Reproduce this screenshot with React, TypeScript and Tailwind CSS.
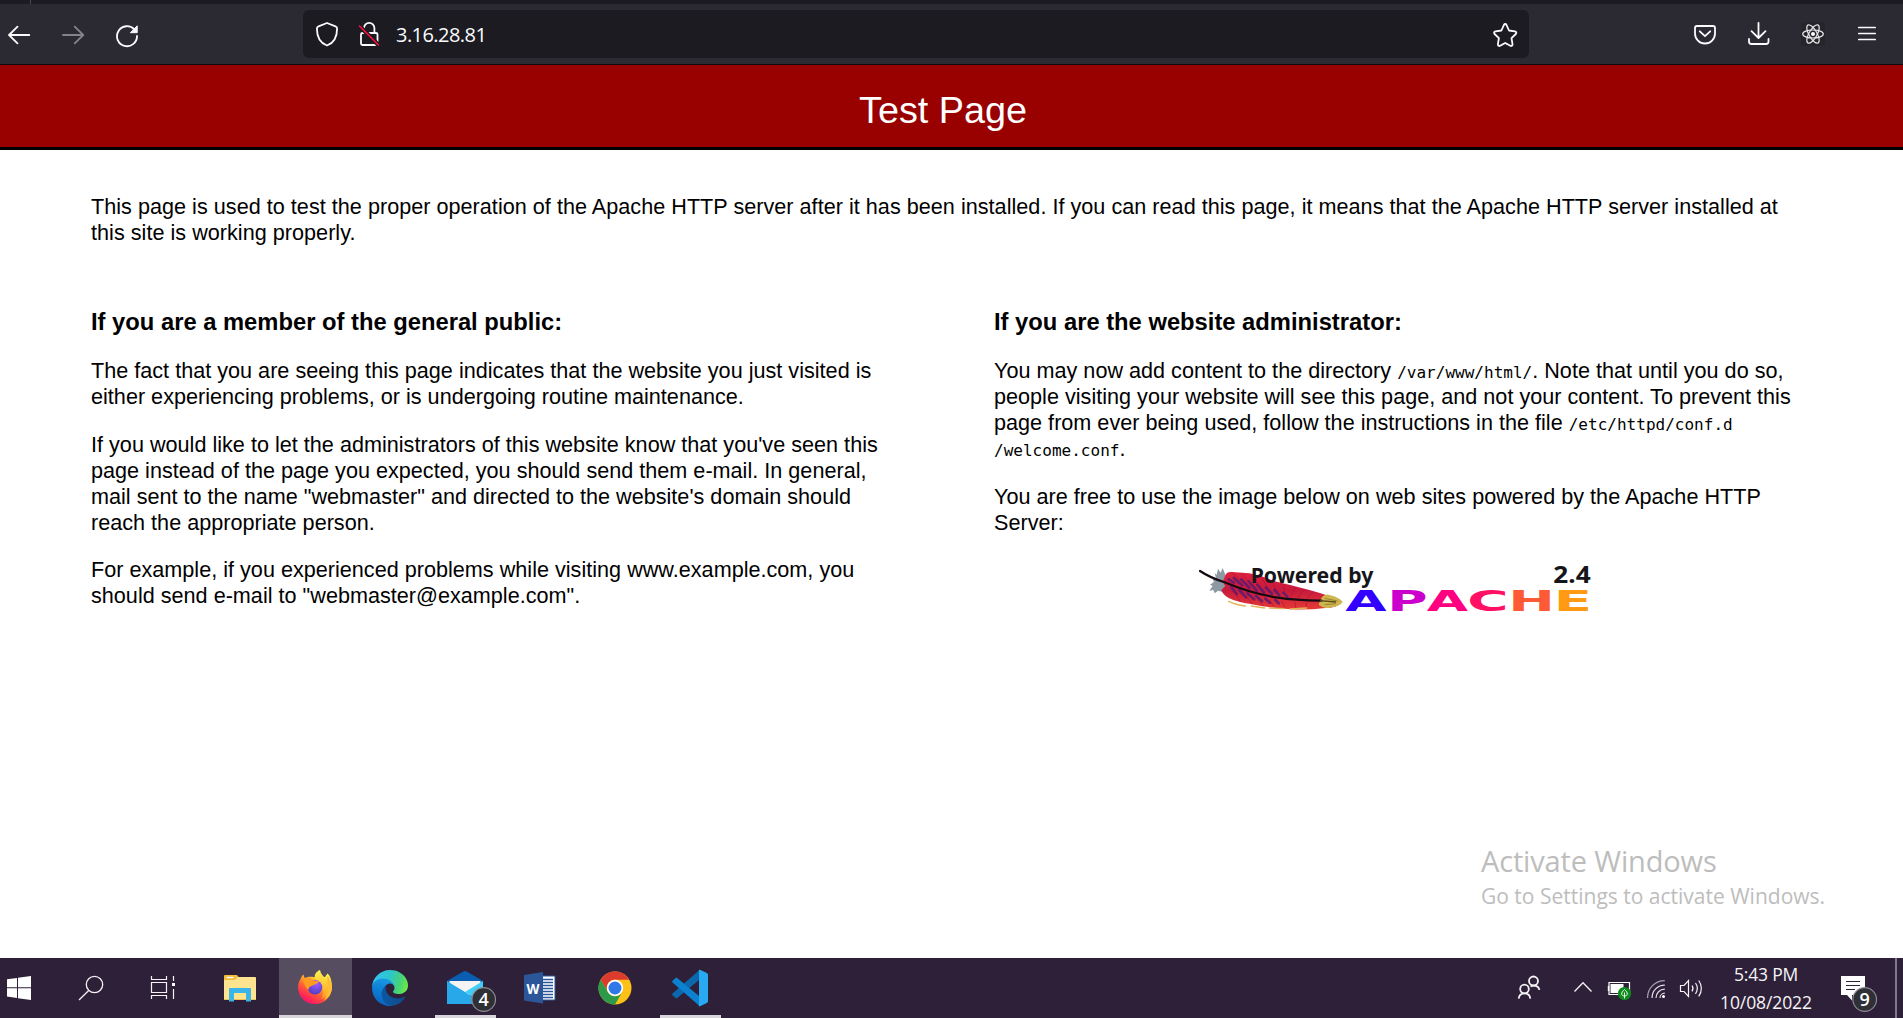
import React from 'react';

type TileProps = { x: number; w: number; children: React.ReactNode };

/* Toolbar cell: its viewBox keeps window coordinates, so cells can be tiled side by side. */
function Tool({ x, w, children }: TileProps) {
  return (
    <svg className="h-[48px] shrink-0" width={w} height={48} viewBox={`${x} 10 ${w} 48`} fill="none" stroke="#fbfbfe" strokeWidth="1.8" strokeLinecap="round" strokeLinejoin="round">
      {children}
    </svg>
  );
}

function Tile({ x, w, children }: TileProps) {
  return (
    <svg className="h-[60px] shrink-0" width={w} height={60} viewBox={`${x} 958 ${w} 60`} fill="none">
      {children}
    </svg>
  );
}

function Toolbar() {
  return (
    <div className="flex h-[60px] items-center bg-[#2b2a33]">
      <div className="flex w-[303px]">
        <Tool x={0} w={46}><path d="M29.3 35H9M17.5 26.7L9 35l8.5 8.3" /></Tool>
        <Tool x={46} w={54}><path stroke="#84838a" d="M63 35h20.3M74.700 26.700L83.300 35l-8.600 8.300" /></Tool>
        <Tool x={100} w={60}>
          <path d="M134.500 29.600A10 10 0 1 0 137 36" />
          <path d="M137.200 26.200v6.500h-6.500z" fill="#fbfbfe" stroke="#fbfbfe" strokeWidth="1" />
        </Tool>
      </div>
      <div className="flex h-[48px] w-[1226px] items-center rounded-[6px] bg-[#1c1b22]">
        <Tool x={303} w={45}>
          <path d="M327 23l8.500 3.300c1.100.4 1.600 1 1.600 2.100 0 8-2.600 14.300-10.100 17.100-7.500-2.800-10.100-9.100-10.100-17.100 0-1.100.5-1.700 1.600-2.100z" />
        </Tool>
        <Tool x={348} w={48}>
          <path d="M364 29.500v-1.500a5.200 5.200 0 0 1 10.400 0v5M361 34.500v9a1.500 1.500 0 0 0 1.500 1.500h13.500a1.500 1.500 0 0 0 1.500-1.500v-9a1.500 1.500 0 0 0-1.500-1.500h-13.500a1.500 1.500 0 0 0-1.500 1.500" />
          <path d="M359.500 26l19 19" stroke="#1c1b22" strokeWidth="4.500" />
          <path d="M359.500 26l19 19" stroke="#ff0f3c" strokeWidth="1.600" />
        </Tool>
        <span className="w-[1088px] pt-[2px] font-['Open_Sans','Noto_Sans',sans-serif] text-[20px] leading-[28px] tracking-[-0.550px] text-[#fbfbfe]">3.16.28.81</span>
        <Tool x={1484} w={45}>
          <path d="M1505.200 24c.600 0 1 .4 1.300 1l2.500 5.500 5.900.800c1.400.200 1.900 1.700.900 2.700l-4.300 4.200 1 6c.200 1.400-1.100 2.200-2.200 1.600l-5.100-2.800-5.100 2.800c-1.100.6-2.400-.2-2.200-1.600l1-6-4.300-4.200c-1-1-.5-2.500.9-2.700l5.900-.8 2.500-5.500c.3-.6.7-1 1.300-1z" />
        </Tool>
      </div>
      <div className="flex w-[374px] pl-[153px]">
        <Tool x={1682} w={50}>
          <path d="M1697 26h16a2 2 0 0 1 2 2v5.500a10 10 0 0 1-20 0V28a2 2 0 0 1 2-2zM1699.800 31.300l5.200 4.900 5.200-4.900" />
        </Tool>
        <Tool x={1732} w={52}>
          <path d="M1758.500 22.800v14.500M1751.500 31.200l7 6.800 7-6.800M1749 39v2.500a2.500 2.500 0 0 0 2.500 2.500h14.500a2.500 2.500 0 0 0 2.500-2.500V39" />
        </Tool>
        <Tool x={1784} w={56}>
          <rect x="1801" y="22" width="24" height="24" rx="2" fill="#26252c" stroke="none" />
          <g strokeWidth="1.200" stroke="#e9e9ec">
            <ellipse cx="1813" cy="34" rx="10.300" ry="4" />
            <ellipse cx="1813" cy="34" rx="10.300" ry="4" transform="rotate(60 1813 34)" />
            <ellipse cx="1813" cy="34" rx="10.300" ry="4" transform="rotate(120 1813 34)" />
          </g>
          <circle cx="1813" cy="34" r="2" fill="#fff" stroke="none" />
        </Tool>
        <Tool x={1840} w={60}><path d="M1858.800 27.500h16.400M1858.800 33.500h16.400M1858.800 39.500h16.400" strokeWidth="1.700" /></Tool>
      </div>
    </div>
  );
}

/* Feather and word mark, drawn at three units per pixel. */
function ApacheLogo() {
  const letters: [string, number, number, string][] = [
    ['A', 496, 124, '#3300ff'],
    ['P', 622, 121, '#cc00cc'],
    ['A', 740, 124, '#ff0080'],
    ['C', 862, 124, '#ff1065'],
    ['H', 985, 140, '#ff5a36'],
    ['E', 1121, 115, '#ff9a12'],
  ];
  return (
    <svg className="ml-[186px] block h-[75px] w-[430px]" viewBox="0 0 1290 225">
      <defs>
        <linearGradient id="plume" x1="0" y1="0" x2="0" y2="1">
          <stop offset="0" stopColor="#e0203e" />
          <stop offset="0.500" stopColor="#c81a3c" />
          <stop offset="1" stopColor="#e63a34" />
        </linearGradient>
      </defs>
      <path d="M104 70l6 4 4-18 8 12 6-14 8 20 4 40-12 12-14-4-10 8-4-10-12 2 10-14-8-4 12-8-4-8 10-4z" fill="#8d99a2" />
      <path d="M136 76q4-12 20-10l52 4q40 8 70 22 60 14 110 28 30 8 52 16 40 8 46 20-16 18-50 18-50 6-100 4-70-4-124-16-40-6-66-18-18-10-22-24l12-12-8-12z" fill="url(#plume)" />
      <g stroke="#4c1a78" strokeLinecap="round" fill="none" strokeWidth="8" opacity="0.750">
        <path d="M146 88l16 10M162 84l24 22M184 88l24 26M206 94l24 28M232 104l20 24M258 112l18 20M284 120l14 16M310 128l12 12" />
        <path d="M154 112l16 20M178 120l20 22M202 130l20 18M228 138l18 16M256 146l14 12M286 150l10 10" />
      </g>
      <g stroke="#a1123c" strokeWidth="3" fill="none" opacity="0.600">
        <path d="M158 68l28 30M184 70l28 34M216 76l24 36M246 84l20 36M276 94l16 34M310 104l6 34M346 112l-16 32M372 120l-20 26M398 128l-20 20M160 122l22 34M194 134l24 28M230 142l20 26M268 150l14 20M306 154l8 18M344 156l4 18M380 158l-2 16" />
      </g>
      <path d="M146 154q20 10 50 14M214 168l40 6M268 174l44 2M330 177l50-3" stroke="#e2b455" strokeWidth="4" strokeLinecap="round" fill="none" />
      <path d="M420 152q8-20 26-18 34 8 42 22-8 14-42 18-18 0-30-10z" fill="#cdb650" />
      <path d="M434 145l38 8M434 164l34-3" stroke="#9a842c" strokeWidth="3" />
      <path d="M60 63q30 20 74 34 80 34 160 46 50 8 130 9" stroke="#130a12" strokeWidth="6.500" strokeLinecap="round" fill="none" />
      <path d="M420 152l48 4" stroke="#5a4a1c" strokeWidth="4" />
      <g className="font-['Noto_Sans','Open_Sans',sans-serif]" fontWeight="700" fill="#16161a">
        <text x="212" y="98" fontSize="66" textLength="368" lengthAdjust="spacingAndGlyphs">Powered by</text>
        <text x="1120" y="99" fontSize="69" textLength="112" lengthAdjust="spacingAndGlyphs">2.4</text>
      </g>
      <g className="font-['DejaVu_Sans',sans-serif]" fontWeight="700">
        {letters.map(([ch, x, w, fill]) => (
          <text key={x} x={x} y="182" fontSize="84" textLength={w} lengthAdjust="spacingAndGlyphs" fill={fill}>{ch}</text>
        ))}
      </g>
    </svg>
  );
}

function Content() {
  const para = 'mb-[21.6px] whitespace-nowrap tracking-[0.015px]';
  const heading = 'mb-[22px] text-[23.76px] leading-[28px] font-bold';
  const mono = "font-['DejaVu_Sans_Mono',monospace] text-[16px] leading-none";
  return (
    <div className="px-[91px] pt-[44px] font-['Liberation_Sans',Arial,sans-serif] text-[21.6px] leading-[26px] text-black">
      <p className="tracking-[0.027px] whitespace-nowrap">
        This page is used to test the proper operation of the Apache HTTP server after it has been installed. If you can read this page, it means that the Apache HTTP server installed at<br />
        this site is working properly.
      </p>
      <div className="mt-[62px] flex">
        <div className="w-[903px]">
          <h2 className={heading}>If you are a member of the general public:</h2>
          <p className={para}>
            The fact that you are seeing this page indicates that the website you just visited is<br />
            either experiencing problems, or is undergoing routine maintenance.
          </p>
          <p className={para}>
            If you would like to let the administrators of this website know that you've seen this<br />
            page instead of the page you expected, you should send them e-mail. In general,<br />
            mail sent to the name "webmaster" and directed to the website's domain should<br />
            reach the appropriate person.
          </p>
          <p className={para}>
            For example, if you experienced problems while visiting www.example.com, you<br />
            should send e-mail to "webmaster@example.com".
          </p>
        </div>
        <div className="w-[801px]">
          <h2 className={heading}>If you are the website administrator:</h2>
          <p className={para}>
            You may now add content to the directory <code className={mono}>/var/www/html/</code>. Note that until you do so,<br />
            people visiting your website will see this page, and not your content. To prevent this<br />
            page from ever being used, follow the instructions in the file <code className={mono}>/etc/httpd/conf.d</code><br />
            <code className={mono}>/welcome.conf</code>.
          </p>
          <p className="mb-[14px] tracking-[0.025px] whitespace-nowrap">
            You are free to use the image below on web sites powered by the Apache HTTP<br />
            Server:
          </p>
          <ApacheLogo />
        </div>
      </div>
    </div>
  );
}

function Taskbar() {
  return (
    <div className="flex h-[60px] bg-[#2e2039] font-['Open_Sans','Noto_Sans',sans-serif] text-white">
      <Tile x={0} w={45}>
        <path fill="#fff" d="M7 979.300l10-1.400v9.300H7zM18 977.700l13-1.700v11.200H18zM7 988.200h10v9.800l-10-1.400zM18 988.200h13V1000l-13-1.800z" />
      </Tile>
      <Tile x={45} w={80}>
        <g stroke="#f4f2f5" strokeWidth="1.300"><circle cx="94.500" cy="984.500" r="8.200" /><path d="M88.700 990.500l-9.700 9.500" /></g>
      </Tile>
      <Tile x={125} w={80}>
        <path stroke="#f4f2f5" strokeWidth="1.200" d="M151.500 976v3.500h15V976M151.500 982.500h15v10h-15zM151.500 999v-3.500h15v3.500M173.500 976v5M173.500 989v10" />
        <path fill="#fff" d="M172 983h3v3h-3z" />
      </Tile>
      <Tile x={205} w={74}>
        <path fill="#f3bd3a" d="M224 976a1 1 0 0 1 1-1h12l2 2.500-2 3h-13z" />
        <path fill="#fff" d="M226.500 976.800h7v1.400h-7z" />
        <path fill="#ffe48f" d="M224 980h10.500l3.500-3h17a1 1 0 0 1 1 1v22h-32z" />
        <path fill="#e8b84a" d="M224 999.200h32v.8h-32z" />
        <path fill="#3bb4e8" d="M229 989a1 1 0 0 1 1-1h20a1 1 0 0 1 1 1v12.500h-5V993h-12v8.500h-5z" />
      </Tile>
      <div className="flex w-[73px] border-b-[3px] border-[#d8d6da] bg-[#574d60]">
        <svg className="shrink-0" width="73" height="57" viewBox="279 958 73 57">
          <defs>
            <linearGradient id="fox" x1="0.850" y1="0.050" x2="0.200" y2="1">
              <stop offset="0" stopColor="#fff44f" />
              <stop offset="0.350" stopColor="#ffb02e" />
              <stop offset="0.600" stopColor="#ff5a36" />
              <stop offset="0.850" stopColor="#ff1f5c" />
              <stop offset="1" stopColor="#e31587" />
            </linearGradient>
            <radialGradient id="globe" cx="0.600" cy="0.250" r="0.800">
              <stop offset="0" stopColor="#a05cff" />
              <stop offset="1" stopColor="#4a3cbf" />
            </radialGradient>
            <linearGradient id="flame" x1="0.500" y1="0" x2="0.500" y2="1">
              <stop offset="0" stopColor="#fff44f" />
              <stop offset="1" stopColor="#ff9a1f" />
            </linearGradient>
          </defs>
          <path fill="url(#fox)" d="M300.500 979c.4-1.900 1.700-3.600 3.200-4.600 0 1.800.6 3 1.300 3.700 2.500-1.200 5-1.500 8.500-1.100h11.500l2.500-3.500c2.900 2 4.500 8.500 4.500 13 0 10.200-7.200 17.600-17 17.600-9.800 0-17-7.600-17-16.800 0-3 .8-5.800 2.500-8.300z" />
          <path fill="url(#flame)" d="M320 970c.6 4 3 5.700 5.600 8.300 4.700 4.600 4.900 10.300 2 15.500-1.800 3-4 4.500-6.400 5.500 2.700-4.300 3-9.500.6-13.300-1.900-3-6.200-4.500-7-8.500-.6-3.300 2-6.500 5.200-7.500z" />
          <path fill="#ffbd35" d="M327 975.800c3 2.400 4.700 6.600 4.900 11.400.1 6-3.700 11-7.900 13.300 3-5 4.500-9.500 4-14.500z" />
          <circle cx="315" cy="987.300" r="7.300" fill="url(#globe)" />
          <path fill="#ff9b22" d="M303 981c1.500-2.500 5.200-3.500 7.500-3.100 1.600 2.600 4.600 3.100 8.500 3.300-1.200 2.800-4.600 3-6.700 4.400-2 .9-3.600 1.900-4.200 4.400-2.600-2.800-3.500-5.500-5.100-9z" />
        </svg>
      </div>
      <div className="flex w-[83px] items-start pt-[12px] pl-[20px]">
        <svg width="36" height="36" viewBox="4.700 4.700 256 256">
          <defs>
            <linearGradient id="e1" x1="0" y1="0" x2="1" y2="0"><stop offset="0" stopColor="#0c59a4" /><stop offset="1" stopColor="#114a8b" /></linearGradient>
            <linearGradient id="e2" x1="0.600" y1="0" x2="0.300" y2="1"><stop offset="0" stopColor="#1b9de2" /><stop offset="0.500" stopColor="#0c7fd6" /><stop offset="1" stopColor="#0a60b8" /></linearGradient>
            <linearGradient id="e3" x1="0" y1="0.400" x2="1" y2="0.600"><stop offset="0" stopColor="#35c1f1" /><stop offset="0.450" stopColor="#2cc7cb" /><stop offset="0.750" stopColor="#45d07c" /><stop offset="1" stopColor="#6bea46" /></linearGradient>
          </defs>
          <path fill="url(#e1)" d="M235.680 195.490a93.730 93.730 0 0 1-10.540 4.710 101.870 101.870 0 0 1-35.900 6.460c-47.320 0-88.540-32.550-88.540-74.320A31.480 31.480 0 0 1 117.130 105c-42.800 1.800-53.800 46.400-53.800 72.530 0 73.880 68.090 81.370 82.760 81.370 7.910 0 19.840-2.300 27-4.560l1.310-.44a128.340 128.340 0 0 0 66.600-52.800 4 4 0 0 0-5.320-5.610z" />
          <path fill="url(#e2)" d="M110.340 246.340A79.200 79.200 0 0 1 87.600 225a80.720 80.720 0 0 1 29.530-120c3.120-1.470 8.450-4.130 15.540-4a32.350 32.350 0 0 1 25.690 13 31.880 31.880 0 0 1 6.360 18.660c0-.21 24.460-79.600-80-79.600-43.900 0-80 41.660-80 78.210a130.150 130.150 0 0 0 12.110 56 128 128 0 0 0 156.380 67.110 75.550 75.550 0 0 1-62.780-8z" />
          <path fill="url(#e3)" d="M156.940 153.780c-.81 1.050-3.300 2.500-3.300 5.660 0 2.610 1.700 5.120 4.720 7.230 14.380 10 41.490 8.680 41.560 8.680a59.560 59.560 0 0 0 30.270-8.350 61.380 61.380 0 0 0 30.430-52.880c.26-22.410-8-37.310-11.340-43.910C228.110 28.900 182.380 5 132.630 5 62.600 5 5.710 61.230 4.720 131.230c.48-36.540 36.800-66.050 80-66.050 3.500 0 23.460.34 42 10.070 16.340 8.580 24.900 18.940 30.850 29.210 6.180 10.670 7.280 24.150 7.280 29.520s-2.740 13.330-7.910 19.800z" />
        </svg>
      </div>
      <Tile x={435} w={65}>
        <path fill="#0a5db0" d="M447 981l16.300-9.400q1.700-1 3.400 0L483 981v4h-36z" />
        <path fill="#f4f4f4" d="M449.500 981h31v8l-15.500 9-15.500-9z" />
        <path fill="#2fb4ee" d="M447 981l36 23h-36z" />
        <path fill="#42cdf8" d="M483 981l-18 11 18 12z" />
        <path fill="#28a8e8" d="M447 981.500v22.500h34l-16-12z" />
        <circle cx="483.700" cy="999.500" r="11.800" fill="#2f3036" stroke="#8d8a92" strokeWidth="1.200" />
        <text x="483.700" y="1006" textAnchor="middle" fontSize="18" fontWeight="600" fill="#fff">4</text>
        <path fill="#d8d6da" d="M435 1015h61v3h-61z" />
      </Tile>
      <Tile x={500} w={80}>
        <path fill="#fff" stroke="#2b569a" strokeWidth="1" d="M540 976h15v24h-15z" />
        <path stroke="#2b569a" strokeWidth="1.400" d="M542 979.500h11M542 982.500h11M542 985.500h11M542 988.500h11M542 991.500h11M542 994.500h11M542 997.500h11" />
        <path fill="#2b569a" d="M524 975l19-3v31.500l-19-3z" />
        <text x="526.500" y="993.500" fontSize="15" fontWeight="700" textLength="13" lengthAdjust="spacingAndGlyphs" fill="#fff">W</text>
      </Tile>
      <Tile x={580} w={75}>
        <circle cx="615" cy="988" r="16.500" fill="#fbc116" />
        <path fill="#de3b2f" d="M600.700 979.750A16.500 16.500 0 0 1 629.300 979.750H615a8.250 8.250 0 0 0-7.140 12.370z" />
        <path fill="#2c9a48" d="M600.700 979.750A16.500 16.500 0 0 0 615 1004.500l7.140-12.370A8.250 8.250 0 0 1 607.860 992.120z" />
        <circle cx="615" cy="988" r="8.200" fill="#fff" />
        <circle cx="615" cy="988" r="6.500" fill="#2f78ea" />
      </Tile>
      <Tile x={655} w={75}>
        <path fill="#0c68ad" d="M672.500 995.200l3 2.900q.8.700 1.700 0L699 980v-9.500L672.500 993.600q-.8.800 0 1.600z" />
        <path fill="#0b81cf" d="M672.500 980.800l3-2.900q.8-.7 1.700 0L699 996v9.500L672.500 982.400q-.8-.8 0-1.600z" />
        <path fill="#28a9f1" d="M698.500 970.200q.9-.6 2-.1l6.300 3q1.200.6 1.200 2v25.800q0 1.400-1.200 2l-6.300 3q-1.100.5-2-.1.500-.3.500-1.300v-33q0-1-.5-1.300z" />
        <path fill="#d8d6da" d="M660 1015h61v3h-61z" />
      </Tile>
      <div className="flex-1" />
      <Tile x={1500} w={60}>
        <g stroke="#f4f2f5" strokeWidth="1.800"><circle cx="1533.500" cy="981" r="4.500" /><circle cx="1524.500" cy="989" r="4.300" /><path d="M1518.700 998.700c.3-3.400 2.800-5.400 5.800-5.400s5.500 2 5.800 5.400M1530.500 986.500c1-.6 2-.9 3-.9 3 0 5.500 1.500 5.900 4.400" /></g>
      </Tile>
      <Tile x={1560} w={42}><path stroke="#f4f2f5" strokeWidth="1.300" d="M1574.500 991.500l8.500-8.700 8.500 8.700" /></Tile>
      <Tile x={1602} w={38}>
        <path stroke="#fff" strokeWidth="1.200" d="M1609 982.500h20.500v12H1609z" />
        <path fill="#fff" d="M1610.500 984h13v9h-13zM1607.800 986h1.500v5h-1.500z" />
        <circle cx="1624.500" cy="993.500" r="6.600" fill="#0f8a1c" />
        <path stroke="#e4f8e4" strokeWidth="1" d="M1624.500 989.500c4 3.300 3.500 6.500 0 6.500s-4-3.200 0-6.500zM1624.500 992.500v6" />
      </Tile>
      <Tile x={1640} w={34}>
        <g strokeWidth="1.200" stroke="#e4e0e8"><path stroke="#a9a2b0" d="M1647.500 998c0-9.800 7.500-17.300 17.300-17.300" /><path d="M1652 998c0-7.300 5.500-12.800 12.800-12.800M1656 998c0-5 3.800-8.800 8.800-8.800M1660 998c0-2.700 2.100-4.800 4.800-4.800" /></g>
        <circle cx="1663.500" cy="996.500" r="1.500" fill="#fff" />
      </Tile>
      <Tile x={1674} w={38}>
        <g strokeWidth="1.200" stroke="#f4f2f5"><path d="M1680.500 985.500h3.500l4.500-5v16l-4.500-5h-3.500z" /><path d="M1692 985.500q2 2.900 0 5.800M1695.500 983q3.700 5.300 0 10.800M1698.700 980.500q5.500 7.800 0 15.800" /></g>
      </Tile>
      <div className="flex w-[108px] flex-col items-center pt-[2px] text-[17.5px] leading-[28px] tracking-[-0.200px] whitespace-nowrap text-[#f6f4f7]">
        <span>5:43 PM</span>
        <span className="tracking-[-0.100px]">10/08/2022</span>
      </div>
      <Tile x={1820} w={70}>
        <path fill="#fff" d="M1841 976h24v19h-13v5.500l-5-5.500h-6z" />
        <path stroke="#2e2039" strokeWidth="1.200" d="M1846 981.500h14M1846 985.500h14M1846 989.500h9" />
        <circle cx="1864.700" cy="999.500" r="11.800" fill="#2f3036" stroke="#8d8a92" strokeWidth="1.200" />
        <text x="1864.700" y="1006" textAnchor="middle" fontSize="18" fontWeight="600" fill="#fff">9</text>
      </Tile>
      <div className="mr-[6px] ml-[5px] w-[2px] bg-[#80788a]" />
    </div>
  );
}

export default function App() {
  return (
    <div className="relative flex h-[1018px] w-[1903px] flex-col overflow-hidden bg-white">
      <div className="flex h-[4px] shrink-0 bg-[#1c1b22] pl-[30px]"><div className="w-px bg-[#4a4952]" /></div>
      <Toolbar />
      <h1 className="h-[86px] shrink-0 border-t border-b-[3px] border-t-[#0c0c0d] border-b-black bg-[#990000] pt-[24px] pl-[859px] font-['Liberation_Sans',Arial,sans-serif] text-[37.8px] leading-[43px] text-white">Test Page</h1>
      <div className="min-h-0 flex-1"><Content /></div>
      <Taskbar />
      <div className="absolute top-[841px] left-[1481px] font-['Open_Sans','Noto_Sans',sans-serif] whitespace-nowrap text-[#bdbdbd]">
        <div className="text-[29px] leading-[40px] tracking-[-0.150px]">Activate Windows</div>
        <div className="pt-px text-[21px] leading-[29px]">Go to Settings to activate Windows.</div>
      </div>
    </div>
  );
}
